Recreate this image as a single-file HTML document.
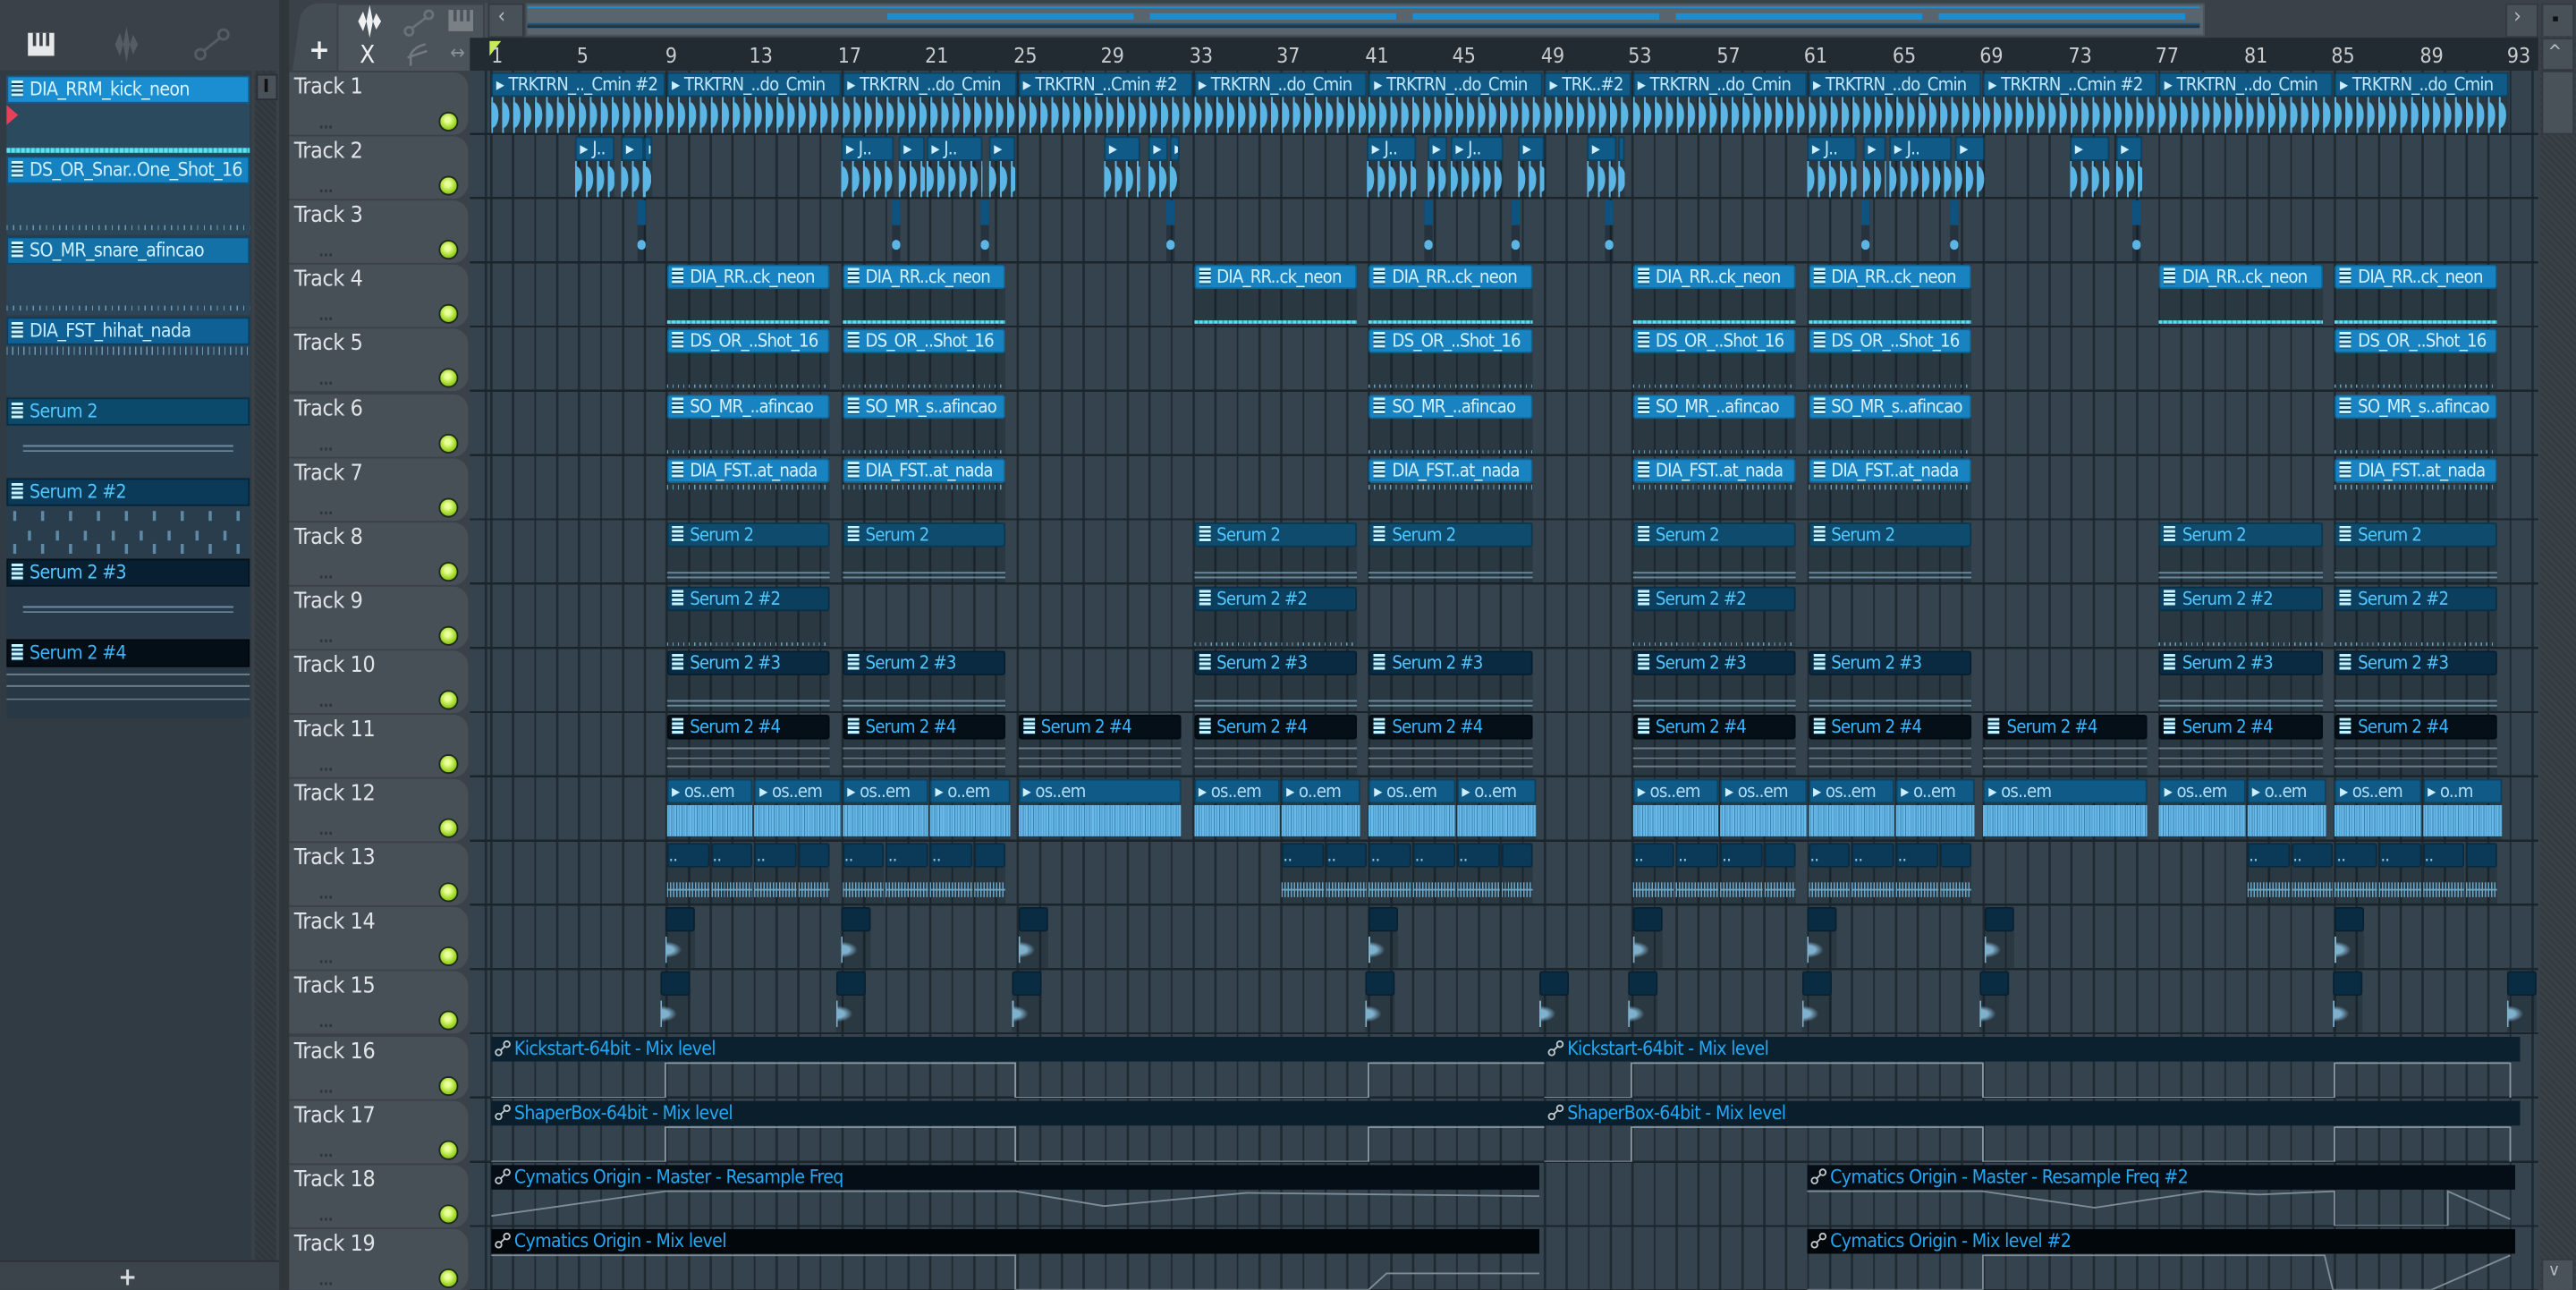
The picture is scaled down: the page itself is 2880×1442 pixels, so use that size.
<!DOCTYPE html>
<html><head><meta charset="utf-8">
<style>
html,body{margin:0;padding:0;background:#3a4148;overflow:hidden;width:2880px;height:1442px}
#w{position:absolute;left:0;top:0;width:1568px;height:785px;transform:scale(1.836735);transform-origin:0 0;font-family:"DejaVu Sans Condensed","DejaVu Sans","Liberation Sans",sans-serif;font-stretch:condensed;background:#3a4148;overflow:hidden}
.ab{position:absolute}
#lp{left:0;top:43px;width:153px;height:724px;background:#313b44;position:absolute}
.it{position:absolute;left:4px;width:148px;height:48px;background:#2c4558}
.it i{display:block;height:17px;font-style:normal;font-size:11.5px;letter-spacing:-.35px;line-height:15px;color:#bfe9ff;white-space:nowrap;overflow:hidden;border:1px solid rgba(0,0,0,.35);box-sizing:border-box}
.pi{display:inline-block;width:7px;height:10px;vertical-align:-1px;margin:0 4px 0 2px;background:repeating-linear-gradient(180deg,#c8f4ff 0 1.6px,#0e3f5c 1.6px 2.6px)}
.th{position:absolute;left:176px;width:109px;height:38px;background:#474f57;border-radius:0 9px 9px 0;color:#e0e4e7;font-size:13.5px;letter-spacing:-.2px}
.th span{position:absolute;left:3px;top:1px}
.th b{position:absolute;left:18px;top:27px;font-size:9px;color:#2e353b}
.th u{position:absolute;left:91px;top:24px;width:10px;height:10px;border-radius:50%;background:radial-gradient(circle at 45% 40%,#e9ff9a 0 18%,#a6dc2e 55%,#6a9e12 100%);border:1.5px solid #1f2a1a;box-sizing:content-box}
#g{position:absolute;left:286px;top:43px;width:1259px;height:742px;background:
repeating-linear-gradient(180deg,transparent 0 37.8px,#1b242b 37.8px 39.1px),
repeating-linear-gradient(90deg,#1e2930 0 1.3px,transparent 1.3px 13.36px) 12.4px 0/100% 100%,
#34434e;overflow:hidden}
.c{position:absolute;left:calc(13px + (var(--b) - 1)*13.36px);width:calc(var(--w)*13.36px - 1px);top:calc((var(--r) - 1)*39.1px + 1px);height:37px;background:rgba(8,18,28,.22);overflow:hidden}
.c>i{display:block;height:15px;font-style:normal;font-size:11px;letter-spacing:-.45px;line-height:13px;white-space:nowrap;overflow:hidden;border-radius:2px;box-sizing:border-box;border:1px solid rgba(0,0,0,.25)}
.k>i{background:#0f5a86;color:#bfe6ff}
.k>i::before,.au>i::before{content:"▸";margin:0 3px 0 2px;color:#cdeeff}
.pb>i{background:#1883c0;color:#d2f0ff}
.s1>i{background:#0e4b6d;color:#52c6ff}
.s2>i{background:#0c3f5e;color:#52c6ff}
.s3>i{background:#092a40;color:#52c6ff}
.s4>i{background:#050f18;color:#38b6ff}
.au>i{background:#0f5a86;color:#b0defa}
.a2>i{background:#0b3a58;color:#8fc8e8}
.a3>i{background:#0a2c43;color:#9cc}
.wk{position:absolute;left:0;right:0;top:15px;bottom:0;background:
radial-gradient(ellipse 4px 8px at 0.5px 50%,#5bb6e6 96%,transparent 100%) 0 0/6.68px 100%,
linear-gradient(90deg,#5bb6e6 0 1px,transparent 1px) 0 2px/6.68px 19px}
.wd{position:absolute;left:0;right:0;top:16px;bottom:2px;background:repeating-linear-gradient(90deg,#64b5e3 0 1px,#4a9ccd 1px 1.5px,#6ab9e6 1.5px 2.6px,#3c86b5 2.6px 3.1px)}
.wt{position:absolute;left:0;right:0;top:24px;height:9px;background:repeating-linear-gradient(90deg,#6aa6c8 0 .8px,transparent .8px 1.9px)}
.wt::after{content:"";position:absolute;left:0;right:0;top:4px;height:1px;background:#6aa6c8}
.ws{position:absolute;left:0;right:0;top:15px;bottom:0;background:radial-gradient(ellipse 10px 5px at 0 50%,#7fb0cc 50%,transparent 100%),linear-gradient(90deg,#7fb0cc 0 1px,transparent 1px) 0 3px/100% 16px no-repeat}
.d4::after{content:"";position:absolute;left:0;right:0;bottom:1px;height:2px;background:repeating-linear-gradient(90deg,#62dbec 0 2px,#3aa8c0 2px 3px)}
.d5::after{content:"";position:absolute;left:0;right:0;bottom:1px;height:2px;background:repeating-linear-gradient(90deg,#6aa0bb 0 .7px,transparent .7px 3.3px)}
.d7::after{content:"";position:absolute;left:0;right:0;top:16px;height:3px;background:repeating-linear-gradient(90deg,#6aa0bb 0 .7px,transparent .7px 3.3px)}
.d8::after{content:"";position:absolute;left:0;right:0;top:29px;height:6px;background:linear-gradient(180deg,transparent 0 1px,rgba(130,170,195,.7) 1px 2px,transparent 2px 4px,rgba(130,170,195,.7) 4px 5px,transparent 5px) 0 0/25px 100%}
.d11::after{content:"";position:absolute;left:0;right:0;top:18px;height:18px;background:linear-gradient(180deg,transparent 0 2px,#6d7c86 2px 3px,transparent 3px 8px,#6d7c86 8px 9px,transparent 9px 13px,#6d7c86 13px 14px,transparent 14px) 0 0/12px 100%}
.t3{position:absolute;width:5px;height:37px;top:79.2px;background:rgba(8,18,28,.3)}
.t3::before{content:"";position:absolute;left:0;right:0;top:0;height:15px;background:#0e5380}
.t3::after{content:"";position:absolute;left:0;right:0;top:24px;height:6px;border-radius:3px;background:#5bb6e6}
.am{position:absolute;height:37px;overflow:hidden}
.am>i{display:block;height:15px;font-style:normal;font-size:11.5px;letter-spacing:-.35px;line-height:14px;color:#22a8f2;white-space:nowrap;overflow:hidden;padding-left:2px}
.am>i svg{position:static;vertical-align:-1px;margin-right:2px}
.am>svg{position:absolute;left:0;top:15px}
.num{position:absolute;top:26px;font-size:12.5px;color:#c9ccce}
</style></head><body><div id="w">

<div class="ab" style="left:17px;top:20px;width:16px;height:14px;background:#e6e8ea"></div>
<div class="ab" style="left:20px;top:20px;width:2px;height:8px;background:#3a4148"></div>
<div class="ab" style="left:24px;top:20px;width:2px;height:8px;background:#3a4148"></div>
<div class="ab" style="left:28px;top:20px;width:2px;height:8px;background:#3a4148"></div>
<svg class="ab" style="left:64px;top:16px" width="26" height="22"><path d="M0 11 L6 11 L9 4 L11 11 L13 0 L15 11 L17 5 L20 11 L26 11 L20 11 L17 17 L15 11 L13 22 L11 11 L9 18 L6 11Z" fill="#555d64"/></svg>
<svg class="ab" style="left:118px;top:17px" width="22" height="20"><circle cx="4" cy="16" r="3" fill="none" stroke="#555d64" stroke-width="1.6"/><circle cx="18" cy="4" r="3" fill="none" stroke="#555d64" stroke-width="1.6"/><path d="M6 14 L16 6" stroke="#555d64" stroke-width="1.6"/></svg>

<div id="lp">
<div class="ab" style="left:155px;top:0;width:13px;height:724px;background:repeating-linear-gradient(45deg,#353c42 0 1.5px,#2f363c 1.5px 3px)"></div>
<div class="ab" style="left:156px;top:2px;width:11px;height:14px;background:#4a5259;border:1px solid #2a3035"></div>
<div class="ab" style="left:161px;top:5px;width:1.5px;height:8px;background:#111"></div>
</div>
<div class="it" style="top:46px;background:#2b4a5e"><i style="background:#1a8ed0;color:#d8f4ff"><span class="pi"></span>DIA_RRM_kick_neon</i><div class="ab" style="left:0;right:0;top:44px;height:3px;background:repeating-linear-gradient(90deg,#5fe0ee 0 2px,#3ab0c8 2px 3px)"></div></div>
<div class="ab" style="left:4px;top:64px;width:0;height:0;border-left:7px solid #e8405a;border-top:6px solid transparent;border-bottom:6px solid transparent"></div>
<div class="it" style="top:95px;background:#2b4659"><i style="background:#1582c2;color:#cfefff"><span class="pi"></span>DS_OR_Snar..One_Shot_16</i><div class="ab" style="left:0;right:0;top:42px;height:3px;background:repeating-linear-gradient(90deg,#6a9ab5 0 .7px,transparent .7px 4px)"></div></div>
<div class="it" style="top:144px;background:#2b4457"><i style="background:#1371a8;color:#cfefff"><span class="pi"></span>SO_MR_snare_afincao</i><div class="ab" style="left:0;right:0;top:42px;height:3px;background:repeating-linear-gradient(90deg,#6a9ab5 0 .7px,transparent .7px 4px)"></div></div>
<div class="it" style="top:193px;background:#2a4254"><i style="background:#0f6094;color:#c6ecff"><span class="pi"></span>DIA_FST_hihat_nada</i><div class="ab" style="left:0;right:0;top:18px;height:5px;background:repeating-linear-gradient(90deg,#6a9ab5 0 .7px,transparent .7px 3.4px)"></div></div>
<div class="it" style="top:242px;background:#2a3f50"><i style="background:#0c4a6c;color:#52c6ff"><span class="pi"></span>Serum 2</i><div class="ab" style="left:10px;right:10px;top:27px;height:12px;background:linear-gradient(180deg,transparent 0 2px,#6d8fa6 2px 3px,transparent 3px 5px,#6d8fa6 5px 6px,transparent 6px) 0 0/30px 100%"></div></div>
<div class="it" style="top:291px;background:#293d4d"><i style="background:#0a3a58;color:#52c6ff"><span class="pi"></span>Serum 2 #2</i><div class="ab" style="left:4px;right:4px;top:20px;height:26px;background:linear-gradient(90deg,#5f8aa6 0 2px,transparent 2px) 0 0/17px 6px repeat-x,linear-gradient(90deg,#5f8aa6 0 2px,transparent 2px) 9px 12px/17px 6px repeat-x,linear-gradient(90deg,#5f8aa6 0 2px,transparent 2px) 0 20px/17px 6px repeat-x"></div></div>
<div class="it" style="top:340px;background:#283a49"><i style="background:#071f30;color:#52c6ff"><span class="pi"></span>Serum 2 #3</i><div class="ab" style="left:10px;right:10px;top:27px;height:12px;background:linear-gradient(180deg,transparent 0 2px,#6d8fa6 2px 3px,transparent 3px 5px,#6d8fa6 5px 6px,transparent 6px) 0 0/30px 100%"></div></div>
<div class="it" style="top:389px;background:#283845"><i style="background:#040e16;color:#38b6ff"><span class="pi"></span>Serum 2 #4</i><div class="ab" style="left:0;right:0;top:19px;height:28px;background:linear-gradient(180deg,transparent 0 2px,#6d7c86 2px 3px,transparent 3px 9px,#6d7c86 9px 10px,transparent 10px 17px,#6d7c86 17px 18px,transparent 18px) 0 0/34px 100%"></div></div>
<div class="ab" style="left:0;top:767px;width:170px;height:18px;background:#3b434b;border-top:1px solid #2a3035"></div>
<div class="ab" style="left:72px;top:768px;font-size:15px;color:#d8dcdf;font-weight:bold">+</div>
<div class="ab" style="left:170px;top:0;width:6px;height:785px;background:#2f363c"></div>

<div class="ab" style="left:178px;top:2px;width:116px;height:41px;background:#454d54;border-radius:10px 0 0 0;transform:skewX(-8deg);transform-origin:0 100%"></div>
<div class="ab" style="left:205px;top:2px;width:88px;height:40px;background:#4c545b;border:1px solid #3a4148"></div>
<div class="ab" style="left:188px;top:21px;font-size:17px;color:#eef0f2;font-weight:bold">+</div>
<svg class="ab" style="left:213px;top:3px" width="26" height="20"><path d="M0 10 L5 10 L8 4 L10 10 L12 0 L14 10 L16 5 L19 10 L25 10 L19 10 L16 15 L14 10 L12 20 L10 10 L8 16 L5 10Z" fill="#eef0f2"/></svg>
<svg class="ab" style="left:245px;top:5px" width="20" height="18"><circle cx="4" cy="14" r="2.5" fill="none" stroke="#6a7279" stroke-width="1.5"/><circle cx="16" cy="4" r="2.5" fill="none" stroke="#6a7279" stroke-width="1.5"/><path d="M6 12 L14 6" stroke="#6a7279" stroke-width="1.5"/></svg>
<div class="ab" style="left:273px;top:6px;width:15px;height:13px;background:#7a8186"></div>
<div class="ab" style="left:276px;top:6px;width:2px;height:7px;background:#4c545b"></div><div class="ab" style="left:280px;top:6px;width:2px;height:7px;background:#4c545b"></div><div class="ab" style="left:284px;top:6px;width:2px;height:7px;background:#4c545b"></div>
<div class="ab" style="left:219px;top:24px;font-size:15px;color:#eef0f2">X</div>
<svg class="ab" style="left:247px;top:25px" width="14" height="16"><path d="M3 15 L3 8 Q6 3 12 2 M1 10 L13 6" stroke="#737a80" stroke-width="1.4" fill="none"/></svg>
<div class="ab" style="left:274px;top:25px;font-size:12px;color:#8a9196">↔</div>

<div class="ab" style="left:297px;top:2px;width:20px;height:19px;background:#485058;border:1px solid #33393f"></div>
<div class="ab" style="left:303px;top:3px;font-size:13px;color:#b7bcc0">‹</div>
<div class="ab" style="left:320px;top:2px;width:1020px;height:18px;background:#5a646c;border:1px solid #4a545c"></div>
<div class="ab" style="left:321px;top:4px;width:1018px;height:1px;background:#1d8fd0"></div>
<div class="ab" style="left:540px;top:8px;width:800px;height:4px;background:repeating-linear-gradient(90deg,#1b8ed2 0 150px,#5a646c 150px 160px)"></div>
<div class="ab" style="left:321px;top:14px;width:1018px;height:3px;background:linear-gradient(180deg,#1e5a80 0 1px,#2a3a46 1px 2px,#15324a 2px)"></div>
<div class="ab" style="left:1525px;top:2px;width:18px;height:19px;background:#485058;border:1px solid #33393f"></div>
<div class="ab" style="left:1530px;top:3px;font-size:13px;color:#b7bcc0">›</div>
<div class="ab" style="left:1547px;top:2px;width:18px;height:19px;background:#485058;border:1px solid #33393f"></div>
<div class="ab" style="left:1554px;top:10px;width:3px;height:3px;background:#111"></div>

<div class="ab" style="left:286px;top:23px;width:1259px;height:20px;background:#222b31"></div>
<div class="ab" style="left:298px;top:25px;width:0;height:0;border-left:7px solid #c4ea5a;border-bottom:9px solid transparent"></div>
<div class="num" style="left:299px">1</div>
<div class="num" style="left:351px">5</div>
<div class="num" style="left:405px">9</div>
<div class="num" style="left:456px">13</div>
<div class="num" style="left:510px">17</div>
<div class="num" style="left:563px">21</div>
<div class="num" style="left:617px">25</div>
<div class="num" style="left:670px">29</div>
<div class="num" style="left:724px">33</div>
<div class="num" style="left:777px">37</div>
<div class="num" style="left:831px">41</div>
<div class="num" style="left:884px">45</div>
<div class="num" style="left:938px">49</div>
<div class="num" style="left:991px">53</div>
<div class="num" style="left:1045px">57</div>
<div class="num" style="left:1098px">61</div>
<div class="num" style="left:1152px">65</div>
<div class="num" style="left:1205px">69</div>
<div class="num" style="left:1259px">73</div>
<div class="num" style="left:1312px">77</div>
<div class="num" style="left:1366px">81</div>
<div class="num" style="left:1419px">85</div>
<div class="num" style="left:1473px">89</div>
<div class="num" style="left:1526px">93</div>

<div class="ab" style="left:1546px;top:22px;width:22px;height:763px;background:repeating-linear-gradient(45deg,#3a4147 0 1.5px,#343b41 1.5px 3px)"></div>
<div class="ab" style="left:1547px;top:23px;width:18px;height:18px;background:#485058;border:1px solid #33393f"></div>
<div class="ab" style="left:1551px;top:25px;font-size:11px;color:#c0c4c8">^</div>
<div class="ab" style="left:1547px;top:43px;width:18px;height:37px;background:#4a5259;border:1px solid #33393f"></div>
<div class="ab" style="left:1547px;top:766px;width:18px;height:19px;background:#4a5259;border:1px solid #33393f"></div>
<div class="ab" style="left:1552px;top:768px;font-size:10px;color:#c0c4c8">v</div>

<div class="th" style="top:44px"><span>Track 1</span><b>...</b><u></u></div>
<div class="th" style="top:83.1px"><span>Track 2</span><b>...</b><u></u></div>
<div class="th" style="top:122.2px"><span>Track 3</span><b>...</b><u></u></div>
<div class="th" style="top:161.3px"><span>Track 4</span><b>...</b><u></u></div>
<div class="th" style="top:200.4px"><span>Track 5</span><b>...</b><u></u></div>
<div class="th" style="top:239.5px"><span>Track 6</span><b>...</b><u></u></div>
<div class="th" style="top:278.6px"><span>Track 7</span><b>...</b><u></u></div>
<div class="th" style="top:317.7px"><span>Track 8</span><b>...</b><u></u></div>
<div class="th" style="top:356.8px"><span>Track 9</span><b>...</b><u></u></div>
<div class="th" style="top:395.9px"><span>Track 10</span><b>...</b><u></u></div>
<div class="th" style="top:435px"><span>Track 11</span><b>...</b><u></u></div>
<div class="th" style="top:474.1px"><span>Track 12</span><b>...</b><u></u></div>
<div class="th" style="top:513.2px"><span>Track 13</span><b>...</b><u></u></div>
<div class="th" style="top:552.3px"><span>Track 14</span><b>...</b><u></u></div>
<div class="th" style="top:591.4px"><span>Track 15</span><b>...</b><u></u></div>
<div class="th" style="top:630.5px"><span>Track 16</span><b>...</b><u></u></div>
<div class="th" style="top:669.6px"><span>Track 17</span><b>...</b><u></u></div>
<div class="th" style="top:708.7px"><span>Track 18</span><b>...</b><u></u></div>
<div class="th" style="top:747.8px"><span>Track 19</span><b>...</b><u></u></div>

<div id="g">
<div class="c k" style="--b:1;--w:8;--r:1"><i>TRKTRN_.._Cmin #2</i><div class="wk"></div></div>
<div class="c k" style="--b:9;--w:8;--r:1"><i>TRKTRN_..do_Cmin</i><div class="wk"></div></div>
<div class="c k" style="--b:17;--w:8;--r:1"><i>TRKTRN_..do_Cmin</i><div class="wk"></div></div>
<div class="c k" style="--b:25;--w:8;--r:1"><i>TRKTRN_..Cmin #2</i><div class="wk"></div></div>
<div class="c k" style="--b:33;--w:8;--r:1"><i>TRKTRN_..do_Cmin</i><div class="wk"></div></div>
<div class="c k" style="--b:41;--w:8;--r:1"><i>TRKTRN_..do_Cmin</i><div class="wk"></div></div>
<div class="c k" style="--b:49;--w:4;--r:1"><i>TRK..#2</i><div class="wk"></div></div>
<div class="c k" style="--b:53;--w:8;--r:1"><i>TRKTRN_..do_Cmin</i><div class="wk"></div></div>
<div class="c k" style="--b:61;--w:8;--r:1"><i>TRKTRN_..do_Cmin</i><div class="wk"></div></div>
<div class="c k" style="--b:69;--w:8;--r:1"><i>TRKTRN_..Cmin #2</i><div class="wk"></div></div>
<div class="c k" style="--b:77;--w:8;--r:1"><i>TRKTRN_..do_Cmin</i><div class="wk"></div></div>
<div class="c k" style="--b:85;--w:8;--r:1"><i>TRKTRN_..do_Cmin</i><div class="wk"></div></div>
<div class="c k" style="--r:2;left:64px;width:24px"><i>J..</i><div class="wk"></div></div>
<div class="c k" style="--r:2;left:92px;width:14px"><i></i><div class="wk"></div></div>
<div class="c k" style="--r:2;left:106px;width:5px"><i></i><div class="wk"></div></div>
<div class="c k" style="--r:2;left:226px;width:32px"><i>J..</i><div class="wk"></div></div>
<div class="c k" style="--r:2;left:261px;width:16px"><i></i><div class="wk"></div></div>
<div class="c k" style="--r:2;left:278px;width:34px"><i>J..</i><div class="wk"></div></div>
<div class="c k" style="--r:2;left:316px;width:16px"><i></i><div class="wk"></div></div>
<div class="c k" style="--r:2;left:386px;width:22px"><i></i><div class="wk"></div></div>
<div class="c k" style="--r:2;left:413px;width:12px"><i></i><div class="wk"></div></div>
<div class="c k" style="--r:2;left:426px;width:6px"><i></i><div class="wk"></div></div>
<div class="c k" style="--r:2;left:546px;width:30px"><i>J..</i><div class="wk"></div></div>
<div class="c k" style="--r:2;left:583px;width:12px"><i></i><div class="wk"></div></div>
<div class="c k" style="--r:2;left:597px;width:32px"><i>J..</i><div class="wk"></div></div>
<div class="c k" style="--r:2;left:638px;width:16px"><i></i><div class="wk"></div></div>
<div class="c k" style="--r:2;left:680px;width:18px"><i></i><div class="wk"></div></div>
<div class="c k" style="--r:2;left:699px;width:4px"><i></i><div class="wk"></div></div>
<div class="c k" style="--r:2;left:814px;width:30px"><i>J..</i><div class="wk"></div></div>
<div class="c k" style="--r:2;left:848px;width:14px"><i></i><div class="wk"></div></div>
<div class="c k" style="--r:2;left:864px;width:38px"><i>J..</i><div class="wk"></div></div>
<div class="c k" style="--r:2;left:904px;width:18px"><i></i><div class="wk"></div></div>
<div class="c k" style="--r:2;left:974px;width:24px"><i></i><div class="wk"></div></div>
<div class="c k" style="--r:2;left:1002px;width:16px"><i></i><div class="wk"></div></div>
<div class="t3" style="left:102px"></div><div class="t3" style="left:257px"></div><div class="t3" style="left:311px"></div><div class="t3" style="left:424px"></div><div class="t3" style="left:581px"></div><div class="t3" style="left:634px"></div><div class="t3" style="left:691px"></div><div class="t3" style="left:847px"></div><div class="t3" style="left:901px"></div><div class="t3" style="left:1012px"></div>
<div class="c pb d4" style="--b:9;--w:7.5;--r:4"><i><span class="pi"></span>DIA_RR..ck_neon</i></div>
<div class="c pb d4" style="--b:17;--w:7.5;--r:4"><i><span class="pi"></span>DIA_RR..ck_neon</i></div>
<div class="c pb d4" style="--b:33;--w:7.5;--r:4"><i><span class="pi"></span>DIA_RR..ck_neon</i></div>
<div class="c pb d4" style="--b:41;--w:7.5;--r:4"><i><span class="pi"></span>DIA_RR..ck_neon</i></div>
<div class="c pb d4" style="--b:53;--w:7.5;--r:4"><i><span class="pi"></span>DIA_RR..ck_neon</i></div>
<div class="c pb d4" style="--b:61;--w:7.5;--r:4"><i><span class="pi"></span>DIA_RR..ck_neon</i></div>
<div class="c pb d4" style="--b:77;--w:7.5;--r:4"><i><span class="pi"></span>DIA_RR..ck_neon</i></div>
<div class="c pb d4" style="--b:85;--w:7.5;--r:4"><i><span class="pi"></span>DIA_RR..ck_neon</i></div>
<div class="c pb d5" style="--b:9;--w:7.5;--r:5"><i><span class="pi"></span>DS_OR_..Shot_16</i></div>
<div class="c pb d5" style="--b:17;--w:7.5;--r:5"><i><span class="pi"></span>DS_OR_..Shot_16</i></div>
<div class="c pb d5" style="--b:41;--w:7.5;--r:5"><i><span class="pi"></span>DS_OR_..Shot_16</i></div>
<div class="c pb d5" style="--b:53;--w:7.5;--r:5"><i><span class="pi"></span>DS_OR_..Shot_16</i></div>
<div class="c pb d5" style="--b:61;--w:7.5;--r:5"><i><span class="pi"></span>DS_OR_..Shot_16</i></div>
<div class="c pb d5" style="--b:85;--w:7.5;--r:5"><i><span class="pi"></span>DS_OR_..Shot_16</i></div>
<div class="c pb d5" style="--b:9;--w:7.5;--r:6"><i><span class="pi"></span>SO_MR_..afincao</i></div>
<div class="c pb d5" style="--b:17;--w:7.5;--r:6"><i><span class="pi"></span>SO_MR_s..afincao</i></div>
<div class="c pb d5" style="--b:41;--w:7.5;--r:6"><i><span class="pi"></span>SO_MR_..afincao</i></div>
<div class="c pb d5" style="--b:53;--w:7.5;--r:6"><i><span class="pi"></span>SO_MR_..afincao</i></div>
<div class="c pb d5" style="--b:61;--w:7.5;--r:6"><i><span class="pi"></span>SO_MR_s..afincao</i></div>
<div class="c pb d5" style="--b:85;--w:7.5;--r:6"><i><span class="pi"></span>SO_MR_s..afincao</i></div>
<div class="c pb d7" style="--b:9;--w:7.5;--r:7"><i><span class="pi"></span>DIA_FST..at_nada</i></div>
<div class="c pb d7" style="--b:17;--w:7.5;--r:7"><i><span class="pi"></span>DIA_FST..at_nada</i></div>
<div class="c pb d7" style="--b:41;--w:7.5;--r:7"><i><span class="pi"></span>DIA_FST..at_nada</i></div>
<div class="c pb d7" style="--b:53;--w:7.5;--r:7"><i><span class="pi"></span>DIA_FST..at_nada</i></div>
<div class="c pb d7" style="--b:61;--w:7.5;--r:7"><i><span class="pi"></span>DIA_FST..at_nada</i></div>
<div class="c pb d7" style="--b:85;--w:7.5;--r:7"><i><span class="pi"></span>DIA_FST..at_nada</i></div>
<div class="c s1 d8" style="--b:9;--w:7.5;--r:8"><i><span class="pi"></span>Serum 2</i></div>
<div class="c s1 d8" style="--b:17;--w:7.5;--r:8"><i><span class="pi"></span>Serum 2</i></div>
<div class="c s1 d8" style="--b:33;--w:7.5;--r:8"><i><span class="pi"></span>Serum 2</i></div>
<div class="c s1 d8" style="--b:41;--w:7.5;--r:8"><i><span class="pi"></span>Serum 2</i></div>
<div class="c s1 d8" style="--b:53;--w:7.5;--r:8"><i><span class="pi"></span>Serum 2</i></div>
<div class="c s1 d8" style="--b:61;--w:7.5;--r:8"><i><span class="pi"></span>Serum 2</i></div>
<div class="c s1 d8" style="--b:77;--w:7.5;--r:8"><i><span class="pi"></span>Serum 2</i></div>
<div class="c s1 d8" style="--b:85;--w:7.5;--r:8"><i><span class="pi"></span>Serum 2</i></div>
<div class="c s2 d5" style="--b:9;--w:7.5;--r:9"><i><span class="pi"></span>Serum 2 #2</i></div>
<div class="c s2 d5" style="--b:33;--w:7.5;--r:9"><i><span class="pi"></span>Serum 2 #2</i></div>
<div class="c s2 d5" style="--b:53;--w:7.5;--r:9"><i><span class="pi"></span>Serum 2 #2</i></div>
<div class="c s2 d5" style="--b:77;--w:7.5;--r:9"><i><span class="pi"></span>Serum 2 #2</i></div>
<div class="c s2 d5" style="--b:85;--w:7.5;--r:9"><i><span class="pi"></span>Serum 2 #2</i></div>
<div class="c s3 d8" style="--b:9;--w:7.5;--r:10"><i><span class="pi"></span>Serum 2 #3</i></div>
<div class="c s3 d8" style="--b:17;--w:7.5;--r:10"><i><span class="pi"></span>Serum 2 #3</i></div>
<div class="c s3 d8" style="--b:33;--w:7.5;--r:10"><i><span class="pi"></span>Serum 2 #3</i></div>
<div class="c s3 d8" style="--b:41;--w:7.5;--r:10"><i><span class="pi"></span>Serum 2 #3</i></div>
<div class="c s3 d8" style="--b:53;--w:7.5;--r:10"><i><span class="pi"></span>Serum 2 #3</i></div>
<div class="c s3 d8" style="--b:61;--w:7.5;--r:10"><i><span class="pi"></span>Serum 2 #3</i></div>
<div class="c s3 d8" style="--b:77;--w:7.5;--r:10"><i><span class="pi"></span>Serum 2 #3</i></div>
<div class="c s3 d8" style="--b:85;--w:7.5;--r:10"><i><span class="pi"></span>Serum 2 #3</i></div>
<div class="c s4 d11" style="--b:9;--w:7.5;--r:11"><i><span class="pi"></span>Serum 2 #4</i></div>
<div class="c s4 d11" style="--b:17;--w:7.5;--r:11"><i><span class="pi"></span>Serum 2 #4</i></div>
<div class="c s4 d11" style="--b:25;--w:7.5;--r:11"><i><span class="pi"></span>Serum 2 #4</i></div>
<div class="c s4 d11" style="--b:33;--w:7.5;--r:11"><i><span class="pi"></span>Serum 2 #4</i></div>
<div class="c s4 d11" style="--b:41;--w:7.5;--r:11"><i><span class="pi"></span>Serum 2 #4</i></div>
<div class="c s4 d11" style="--b:53;--w:7.5;--r:11"><i><span class="pi"></span>Serum 2 #4</i></div>
<div class="c s4 d11" style="--b:61;--w:7.5;--r:11"><i><span class="pi"></span>Serum 2 #4</i></div>
<div class="c s4 d11" style="--b:69;--w:7.5;--r:11"><i><span class="pi"></span>Serum 2 #4</i></div>
<div class="c s4 d11" style="--b:77;--w:7.5;--r:11"><i><span class="pi"></span>Serum 2 #4</i></div>
<div class="c s4 d11" style="--b:85;--w:7.5;--r:11"><i><span class="pi"></span>Serum 2 #4</i></div>
<div class="c au" style="--b:9;--w:4;--r:12"><i>os..em</i><div class="wd"></div></div>
<div class="c au" style="--b:13;--w:4;--r:12"><i>os..em</i><div class="wd"></div></div>
<div class="c au" style="--b:17;--w:4;--r:12"><i>os..em</i><div class="wd"></div></div>
<div class="c au" style="--b:21;--w:3.7;--r:12"><i>o..em</i><div class="wd"></div></div>
<div class="c au" style="--b:25;--w:7.5;--r:12"><i>os..em</i><div class="wd"></div></div>
<div class="c au" style="--b:33;--w:4;--r:12"><i>os..em</i><div class="wd"></div></div>
<div class="c au" style="--b:37;--w:3.7;--r:12"><i>o..em</i><div class="wd"></div></div>
<div class="c au" style="--b:41;--w:4;--r:12"><i>os..em</i><div class="wd"></div></div>
<div class="c au" style="--b:45;--w:3.7;--r:12"><i>o..em</i><div class="wd"></div></div>
<div class="c au" style="--b:53;--w:4;--r:12"><i>os..em</i><div class="wd"></div></div>
<div class="c au" style="--b:57;--w:4;--r:12"><i>os..em</i><div class="wd"></div></div>
<div class="c au" style="--b:61;--w:4;--r:12"><i>os..em</i><div class="wd"></div></div>
<div class="c au" style="--b:65;--w:3.7;--r:12"><i>o..em</i><div class="wd"></div></div>
<div class="c au" style="--b:69;--w:7.5;--r:12"><i>os..em</i><div class="wd"></div></div>
<div class="c au" style="--b:77;--w:4;--r:12"><i>os..em</i><div class="wd"></div></div>
<div class="c au" style="--b:81;--w:3.7;--r:12"><i>o..em</i><div class="wd"></div></div>
<div class="c au" style="--b:85;--w:4;--r:12"><i>os..em</i><div class="wd"></div></div>
<div class="c au" style="--b:89;--w:3.7;--r:12"><i>o..m</i><div class="wd"></div></div>
<div class="c a2" style="--b:9;--w:2;--r:13"><i>..</i><div class="wt"></div></div>
<div class="c a2" style="--b:11;--w:2;--r:13"><i>..</i><div class="wt"></div></div>
<div class="c a2" style="--b:13;--w:2;--r:13"><i>..</i><div class="wt"></div></div>
<div class="c a2" style="--b:15;--w:1.5;--r:13"><i></i><div class="wt"></div></div>
<div class="c a2" style="--b:17;--w:2;--r:13"><i>..</i><div class="wt"></div></div>
<div class="c a2" style="--b:19;--w:2;--r:13"><i>..</i><div class="wt"></div></div>
<div class="c a2" style="--b:21;--w:2;--r:13"><i>..</i><div class="wt"></div></div>
<div class="c a2" style="--b:23;--w:1.5;--r:13"><i></i><div class="wt"></div></div>
<div class="c a2" style="--b:37;--w:2;--r:13"><i>..</i><div class="wt"></div></div>
<div class="c a2" style="--b:39;--w:2;--r:13"><i>..</i><div class="wt"></div></div>
<div class="c a2" style="--b:41;--w:2;--r:13"><i>..</i><div class="wt"></div></div>
<div class="c a2" style="--b:43;--w:2;--r:13"><i>..</i><div class="wt"></div></div>
<div class="c a2" style="--b:45;--w:2;--r:13"><i>..</i><div class="wt"></div></div>
<div class="c a2" style="--b:47;--w:1.5;--r:13"><i></i><div class="wt"></div></div>
<div class="c a2" style="--b:53;--w:2;--r:13"><i>..</i><div class="wt"></div></div>
<div class="c a2" style="--b:55;--w:2;--r:13"><i>..</i><div class="wt"></div></div>
<div class="c a2" style="--b:57;--w:2;--r:13"><i>..</i><div class="wt"></div></div>
<div class="c a2" style="--b:59;--w:1.5;--r:13"><i></i><div class="wt"></div></div>
<div class="c a2" style="--b:61;--w:2;--r:13"><i>..</i><div class="wt"></div></div>
<div class="c a2" style="--b:63;--w:2;--r:13"><i>..</i><div class="wt"></div></div>
<div class="c a2" style="--b:65;--w:2;--r:13"><i>..</i><div class="wt"></div></div>
<div class="c a2" style="--b:67;--w:1.5;--r:13"><i></i><div class="wt"></div></div>
<div class="c a2" style="--b:81;--w:2;--r:13"><i>..</i><div class="wt"></div></div>
<div class="c a2" style="--b:83;--w:2;--r:13"><i>..</i><div class="wt"></div></div>
<div class="c a2" style="--b:85;--w:2;--r:13"><i>..</i><div class="wt"></div></div>
<div class="c a2" style="--b:87;--w:2;--r:13"><i>..</i><div class="wt"></div></div>
<div class="c a2" style="--b:89;--w:2;--r:13"><i>..</i><div class="wt"></div></div>
<div class="c a2" style="--b:91;--w:1.5;--r:13"><i></i><div class="wt"></div></div>
<div class="c a3" style="--r:14;left:119px;width:18px"><i></i><div class="ws"></div></div>
<div class="c a3" style="--r:14;left:226px;width:18px"><i></i><div class="ws"></div></div>
<div class="c a3" style="--r:14;left:334px;width:18px"><i></i><div class="ws"></div></div>
<div class="c a3" style="--r:14;left:547px;width:18px"><i></i><div class="ws"></div></div>
<div class="c a3" style="--r:14;left:708px;width:18px"><i></i><div class="ws"></div></div>
<div class="c a3" style="--r:14;left:814px;width:18px"><i></i><div class="ws"></div></div>
<div class="c a3" style="--r:14;left:922px;width:18px"><i></i><div class="ws"></div></div>
<div class="c a3" style="--r:14;left:1135px;width:18px"><i></i><div class="ws"></div></div>
<div class="c a3" style="--r:15;left:116px;width:18px"><i></i><div class="ws"></div></div>
<div class="c a3" style="--r:15;left:223px;width:18px"><i></i><div class="ws"></div></div>
<div class="c a3" style="--r:15;left:330px;width:18px"><i></i><div class="ws"></div></div>
<div class="c a3" style="--r:15;left:545px;width:18px"><i></i><div class="ws"></div></div>
<div class="c a3" style="--r:15;left:651px;width:18px"><i></i><div class="ws"></div></div>
<div class="c a3" style="--r:15;left:705px;width:18px"><i></i><div class="ws"></div></div>
<div class="c a3" style="--r:15;left:811px;width:18px"><i></i><div class="ws"></div></div>
<div class="c a3" style="--r:15;left:919px;width:18px"><i></i><div class="ws"></div></div>
<div class="c a3" style="--r:15;left:1134px;width:18px"><i></i><div class="ws"></div></div>
<div class="c a3" style="--r:15;left:1240px;width:18px"><i></i><div class="ws"></div></div>
<div class="am" style="left:13px;top:587.5px;width:641px"><i style="background:#0b2130"><svg width="10" height="10"><circle cx="2.5" cy="7.5" r="1.8" fill="none" stroke="#c0c8cc" stroke-width="1"/><circle cx="7.5" cy="2.5" r="1.8" fill="none" stroke="#c0c8cc" stroke-width="1"/><path d="M3.8 6.2 L6.2 3.8" stroke="#c0c8cc"/></svg>Kickstart-64bit - Mix level</i><svg width="641" height="23"><polyline points="0,22 106,22 106,1 319,1 319,22 534,22 534,1 641,1" fill="none" stroke="#8a9aa4" stroke-width="1"/></svg></div>
<div class="am" style="left:654px;top:587.5px;width:594px"><i style="background:#0b2130"><svg width="10" height="10"><circle cx="2.5" cy="7.5" r="1.8" fill="none" stroke="#c0c8cc" stroke-width="1"/><circle cx="7.5" cy="2.5" r="1.8" fill="none" stroke="#c0c8cc" stroke-width="1"/><path d="M3.8 6.2 L6.2 3.8" stroke="#c0c8cc"/></svg>Kickstart-64bit - Mix level</i><svg width="594" height="23"><polyline points="0,22 53,22 53,1 267,1 267,22 481,22 481,1 588,1 588,22" fill="none" stroke="#8a9aa4" stroke-width="1"/></svg></div>
<div class="am" style="left:13px;top:626.6px;width:641px"><i style="background:#0a1e2c"><svg width="10" height="10"><circle cx="2.5" cy="7.5" r="1.8" fill="none" stroke="#c0c8cc" stroke-width="1"/><circle cx="7.5" cy="2.5" r="1.8" fill="none" stroke="#c0c8cc" stroke-width="1"/><path d="M3.8 6.2 L6.2 3.8" stroke="#c0c8cc"/></svg>ShaperBox-64bit - Mix level</i><svg width="641" height="23"><polyline points="0,22 106,22 106,1 319,1 319,22 534,22 534,1 641,1" fill="none" stroke="#8a9aa4" stroke-width="1"/></svg></div>
<div class="am" style="left:654px;top:626.6px;width:594px"><i style="background:#0a1e2c"><svg width="10" height="10"><circle cx="2.5" cy="7.5" r="1.8" fill="none" stroke="#c0c8cc" stroke-width="1"/><circle cx="7.5" cy="2.5" r="1.8" fill="none" stroke="#c0c8cc" stroke-width="1"/><path d="M3.8 6.2 L6.2 3.8" stroke="#c0c8cc"/></svg>ShaperBox-64bit - Mix level</i><svg width="594" height="23"><polyline points="0,22 53,22 53,1 267,1 267,22 481,22 481,1 588,1 588,22" fill="none" stroke="#8a9aa4" stroke-width="1"/></svg></div>
<div class="am" style="left:13px;top:665.7px;width:638px"><i style="background:#050e16"><svg width="10" height="10"><circle cx="2.5" cy="7.5" r="1.8" fill="none" stroke="#c0c8cc" stroke-width="1"/><circle cx="7.5" cy="2.5" r="1.8" fill="none" stroke="#c0c8cc" stroke-width="1"/><path d="M3.8 6.2 L6.2 3.8" stroke="#c0c8cc"/></svg>Cymatics Origin - Master - Resample Freq</i><svg width="638" height="23"><polyline points="0,16 106,1 319,1 373,10 460,2 638,4" fill="none" stroke="#7f8d96" stroke-width="1"/></svg></div>
<div class="am" style="left:814px;top:665.7px;width:431px"><i style="background:#050e16"><svg width="10" height="10"><circle cx="2.5" cy="7.5" r="1.8" fill="none" stroke="#c0c8cc" stroke-width="1"/><circle cx="7.5" cy="2.5" r="1.8" fill="none" stroke="#c0c8cc" stroke-width="1"/><path d="M3.8 6.2 L6.2 3.8" stroke="#c0c8cc"/></svg>Cymatics Origin - Master - Resample Freq #2</i><svg width="431" height="23"><polyline points="0,1 107,1 175,11 242,1 275,3 321,1 321,22 390,22 390,1 428,18" fill="none" stroke="#7f8d96" stroke-width="1"/></svg></div>
<div class="am" style="left:13px;top:704.8px;width:638px"><i style="background:#02070b"><svg width="10" height="10"><circle cx="2.5" cy="7.5" r="1.8" fill="none" stroke="#c0c8cc" stroke-width="1"/><circle cx="7.5" cy="2.5" r="1.8" fill="none" stroke="#c0c8cc" stroke-width="1"/><path d="M3.8 6.2 L6.2 3.8" stroke="#c0c8cc"/></svg>Cymatics Origin - Mix level</i><svg width="638" height="23"><polyline points="0,1 319,1 319,22 534,22 545,12 638,12" fill="none" stroke="#7f8d96" stroke-width="1"/></svg></div>
<div class="am" style="left:814px;top:704.8px;width:431px"><i style="background:#02070b"><svg width="10" height="10"><circle cx="2.5" cy="7.5" r="1.8" fill="none" stroke="#c0c8cc" stroke-width="1"/><circle cx="7.5" cy="2.5" r="1.8" fill="none" stroke="#c0c8cc" stroke-width="1"/><path d="M3.8 6.2 L6.2 3.8" stroke="#c0c8cc"/></svg>Cymatics Origin - Mix level #2</i><svg width="431" height="23"><polyline points="0,22 107,22 107,1 315,1 320,22 380,22 428,1" fill="none" stroke="#7f8d96" stroke-width="1"/></svg></div>
</div>
</div></body></html>
